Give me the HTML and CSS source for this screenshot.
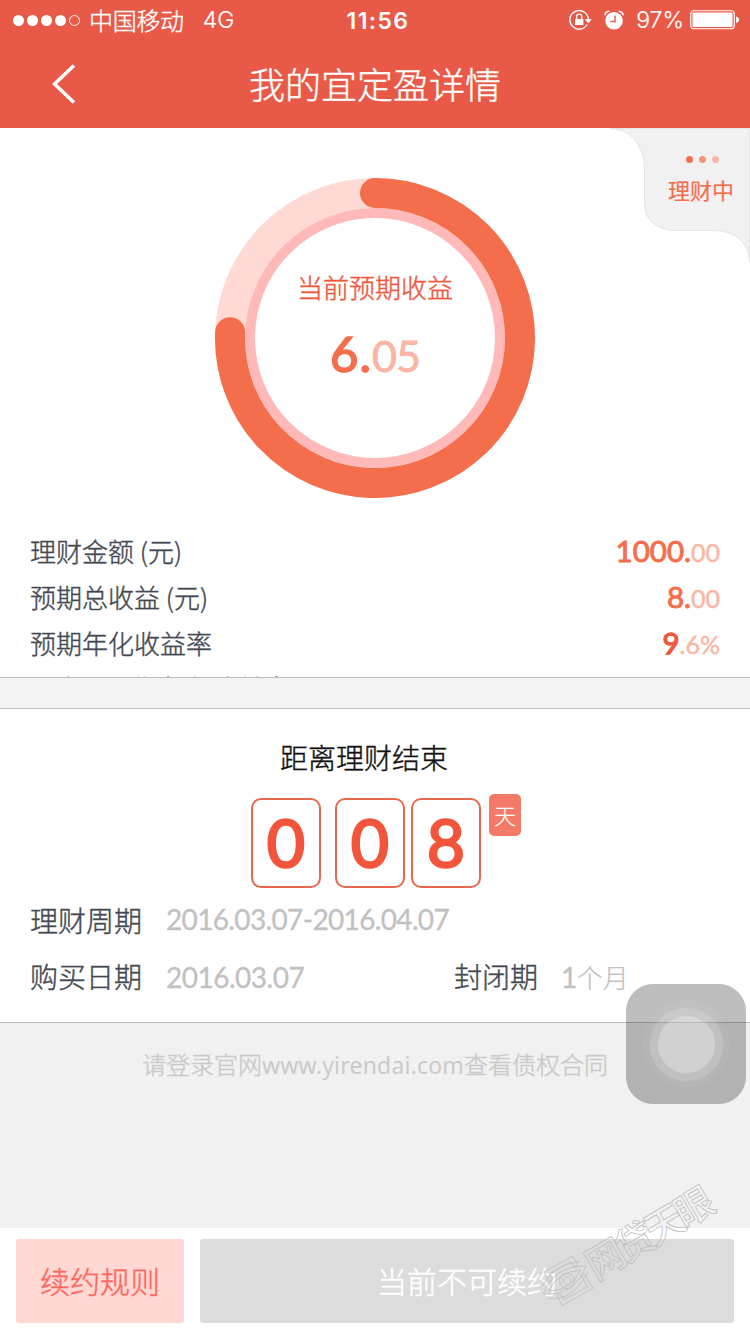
FILE: index.html
```html
<!DOCTYPE html>
<html lang="zh-CN">
<head>
<meta charset="utf-8">
<title>我的宜定盈详情</title>
<link rel="stylesheet" href="styles.css">
</head>
<body>
<div class="screen">
  <header class="header">
    <div class="status">
      <div class="status-left">
        <svg class="signal" width="70" height="14" viewBox="0 0 70 14"><g fill="#fff"><circle cx="6.500" cy="7.500" r="5.500"/><circle cx="20.500" cy="7.500" r="5.500"/><circle cx="34.500" cy="7.500" r="5.500"/><circle cx="48.500" cy="7.500" r="5.500"/></g><circle cx="62.500" cy="7.500" r="5" fill="none" stroke="#fff"/></svg>
        <span class="carrier">中国移动</span>
        <span class="network">4G</span>
      </div>
      <div class="time">11:56</div>
      <div class="status-right">
        <svg class="lock" width="24" height="22" viewBox="0 0 24 22"><path d="M19.2 15.500A9.300 9.300 0 1 1 19.600 7" fill="none" stroke="#fff" stroke-width="1.4"/><path d="M19.600 7q.8 1.500.9 4" fill="none" stroke="#fff" stroke-width="1.4"/><path d="M16.600 10.200h7.200l-3.600 4z" fill="#fff"/><rect x="7" y="10" width="8.400" height="6" fill="#fff"/><path d="M8.600 10V7.700a2.600 2.600 0 0 1 5.200 0V10" fill="none" stroke="#fff" stroke-width="1.3"/></svg>
        <svg class="alarm" width="20" height="20" viewBox="0 0 20 20"><circle cx="10" cy="10.800" r="8.800" fill="#fff"/><path d="M.9 5.300Q1 1.500 5.400 1.200M19.100 5.300Q19 1.500 14.600 1.200" fill="none" stroke="#fff" stroke-width="1.6"/><path d="M11 5.500v6H6.500" fill="none" stroke="#e95947" stroke-width="1.4"/></svg>
        <span class="percent">97%</span>
        <svg class="battery" width="50" height="20" viewBox="0 0 50 20"><rect x=".75" y=".75" width="43.500" height="18" rx="3" fill="none" stroke="#fff" stroke-width="1.2"/><rect x="2.500" y="2.500" width="40" height="14.500" rx="1" fill="#fff"/><path d="M46 6.500q3 .6 3 3.200t-3 3.300z" fill="#fff"/></svg>
      </div>
    </div>
    <div class="nav">
      <svg class="back" width="24" height="42" viewBox="0 0 24 42"><path d="M22 2.500 2.500 21 22 39.500" fill="none" stroke="#fff" stroke-width="3.600"/></svg>
      <h1 class="title">我的宜定盈详情</h1>
    </div>
  </header>

  <section class="summary">
    <div class="state">
      <svg class="state-bg" width="140" height="136" viewBox="0 0 140 136"><path d="M0 .5C20 .5 34.500 18 34.500 40V76C34.500 91 46 102.500 66 102.500H104C126 102.500 139.500 116 139.500 134V.5Z" fill="#f1f1f1" stroke="#e5e5e5"/></svg>
      <div class="state-dots"><i></i><i></i><i></i></div>
      <div class="state-text">理财中</div>
    </div>
    <div class="gauge">
      <svg class="ring" width="320" height="320" viewBox="0 0 320 320" fill="none"><circle cx="160" cy="160" r="145" stroke="#ffd9d3" stroke-width="30"/><circle cx="160" cy="160" r="125" stroke="#ffb9b9" stroke-width="10"/><path d="M160 15A145 145 0 1 1 15.100 154.300" stroke="#f56e4c" stroke-width="30" stroke-linecap="round"/></svg>
      <div class="gauge-text">
        <div class="gauge-label">当前预期收益</div>
        <div class="gauge-value"><b>6.</b><span>05</span></div>
      </div>
    </div>
    <div class="rows">
      <div class="row"><span>理财金额 (元)</span><span class="amount"><b>1000.</b>00</span></div>
      <div class="row"><span>预期总收益 (元)</span><span class="amount"><b>8.</b>00</span></div>
      <div class="row"><span>预期年化收益率</span><span class="amount rate"><b>9</b>.6%</span></div>
      <div class="row next"><span>已实现预期年化收益率</span></div>
    </div>
  </section>

  <div class="gap"></div>

  <section class="term">
    <h2 class="term-title">距离理财结束</h2>
    <div class="countdown">
      <span class="digit">0</span><span class="digit second">0</span><span class="digit">8</span><span class="unit">天</span>
    </div>
    <div class="info">
      <span class="key">理财周期</span><span class="date period">2016.03.07-2016.04.07</span>
    </div>
    <div class="info purchase">
      <span class="key">购买日期</span><span class="date">2016.03.07</span>
      <span class="key closed">封闭期</span><span class="months"><i>1</i>个月</span>
    </div>
  </section>

  <p class="note">请登录官网<span>www.yirendai.com</span>查看债权合同</p>

  <footer class="actions">
    <button class="btn rules">续约规则</button>
    <button class="btn disabled">当前不可续约</button>
  </footer>

  <div class="assist"><i class="halo"></i><i class="mid"></i><i class="core"></i></div>

  <svg class="watermark" width="220" height="164" viewBox="0 0 220 164" fill="none" stroke="#c0c0c0" stroke-width=".8">
    <g transform="translate(37 111) rotate(-29)">
      <path d="M-16 -7V-19H17V-9H13V-15H-12V-8ZM-16 8V19H19V3H15V15H-12V8Z"/>
      <path d="M-27 0Q-5 -20 24 -4Q0 17 -27 0ZM-21 0Q-4 -13 17 -3Q0 11 -21 0Z"/>
      <circle r="7.500"/><circle r="4"/><path d="M-25 6Q-5 21 23 2M-23 -8Q-5 -21 21 -11"/>
    </g>
    <text class="watermark-text" transform="translate(66 111) rotate(-30.500)">网贷天眼</text>
  </svg>
</div>
</body>
</html>
```

FILE: styles.css
```css
* { box-sizing: border-box; }
body { margin: 0; font-family: "Noto Sans CJK SC", sans-serif; font-weight: 300; -webkit-text-stroke: 0.4px currentColor; }
i { font-style: normal; }
svg { display: block; flex: none; }

.screen { position: relative; display: flex; flex-direction: column; width: 750px; height: 1334px; overflow: hidden; background: #f1f1f1; }

.header { height: 128px; background: #e95947; color: #fff; }
.status { display: grid; grid-template-columns: 1fr auto 1fr; height: 40px; padding: 0 10px 0 12px; font-size: 24px; line-height: 38px; }
.status-left, .status-right { display: flex; align-items: center; height: 40px; }
.signal { margin-top: -1px; }
.carrier { margin-left: 7px; letter-spacing: -0.3px; }
.network { margin-left: 19px; font-family: Inter, sans-serif; font-weight: 300; font-size: 23px; line-height: 41px; -webkit-text-stroke: 0.2px; }
.time { padding-left: 4px; font-family: Inter, sans-serif; font-weight: 600; font-size: 23px; letter-spacing: 1.4px; line-height: 42px; -webkit-text-stroke: 0; }
.status-right { justify-content: flex-end; }
.alarm { margin-left: 12px; }
.percent { margin-left: 12px; font-family: Inter, sans-serif; font-size: 23px; line-height: 42px; -webkit-text-stroke: 0.2px; }
.battery { margin-left: 6px; }
.nav { display: grid; grid-template-columns: 52px 24px 1fr 76px; align-items: center; height: 88px; }
.back { grid-column: 2; }
.title { margin: 0; padding-bottom: 2px; font-size: 36px; font-weight: 300; line-height: 84px; text-align: center; }

.summary { position: relative; height: 550px; padding: 50px 30px 0; overflow: hidden; background: #fff; border-bottom: 1px solid #bdbdbd; }
.state { position: absolute; top: 0; right: 0; width: 140px; height: 136px; color: #f56e4c; }
.state-bg { position: absolute; inset: 0; }
.state-dots { position: relative; display: flex; gap: 6px; padding: 28px 0 0 76px; }
.state-dots i { width: 7px; height: 7px; border-radius: 50%; background: #f56e4c; }
.state-dots i:nth-child(2) { background: #f4937b; }
.state-dots i:nth-child(3) { background: #f4b9ab; }
.state-text { position: relative; padding: 8px 0 0 58px; font-size: 22px; font-weight: 400; line-height: 36px; -webkit-text-stroke: 0.2px; }
.gauge { display: grid; justify-content: center; height: 320px; }
.ring, .gauge-text { grid-area: 1 / 1; }
.gauge-text { padding-top: 89px; text-align: center; }
.gauge-label { color: #ef573d; font-size: 26px; line-height: 40px; }
.gauge-value { margin-top: 16px; font-family: Lato, sans-serif; line-height: 60px; }
.gauge-value b { color: #f56e4c; font-size: 49px; font-weight: 400; letter-spacing: 1px; -webkit-text-stroke: 1.6px; }
.gauge-value span { color: #fab5a4; font-size: 43px; font-weight: 400; letter-spacing: -1px; -webkit-text-stroke: 0.8px; }
.rows { padding-top: 31px; }
.row { display: flex; justify-content: space-between; height: 46px; color: #434852; font-size: 26px; line-height: 44px; }
.next { margin-top: -1px; }
.amount { color: #fab5a4; font-family: Lato, sans-serif; font-size: 25px; font-weight: 400; line-height: 44px; }
.amount b { color: #f56e4c; font-size: 29.5px; font-weight: 400; -webkit-text-stroke: 1px; }
.rate b { color: #ef573d; -webkit-text-stroke: 1.3px; }

.gap { height: 30px; background: #f3f3f3; }

.term { height: 315px; background: #fff; border-top: 1px solid #bdbdbd; border-bottom: 1px solid #bdbdbd; }
.term-title { margin: 0; padding: 28px 0 0 280px; color: #111; font-size: 28px; font-weight: 300; line-height: 40px; }
.countdown { display: flex; align-items: flex-end; height: 111px; padding-left: 251px; }
.digit { width: 70px; height: 90px; border: 2px solid #e8694d; border-radius: 10px; color: #f2553c; font-family: Lato, sans-serif; font-size: 66px; font-weight: 400; line-height: 84px; text-align: center; -webkit-text-stroke: 2.4px; }
.second { margin: 0 6px 0 14px; }
.unit { align-self: flex-start; width: 32px; height: 42px; margin: 17px 0 0 8px; border-radius: 5px; background: #f27a66; color: #fff; font-size: 22px; line-height: 41px; text-align: center; -webkit-text-stroke: 0.2px; }
.info { display: flex; height: 56px; padding: 4px 30px 0; color: #434852; font-size: 28px; line-height: 56px; }
.key { width: 136px; }
.date, .months i { color: #c1c1c1; font-family: Lato, sans-serif; font-weight: 400; letter-spacing: -0.5px; -webkit-text-stroke: 0.3px; }
.period { letter-spacing: -0.65px; line-height: 55px; }
.purchase .date { width: 288px; line-height: 59px; }
.closed { width: 107px; }
.months { color: #c1c1c1; font-size: 26px; line-height: 57px; -webkit-text-stroke: 0.2px; }
.months i { font-size: 28px; }

.note { margin: 21px 0 0; color: #cacaca; font-size: 24px; line-height: 40px; text-align: center; }
.note span { font-family: "Noto Sans", sans-serif; font-weight: 400; font-size: 23px; letter-spacing: 0.2px; -webkit-text-stroke: 0; }

.actions { display: flex; gap: 16px; height: 106px; margin-top: auto; padding: 11px 16px; background: #fff; }
.btn { height: 84px; padding: 0 0 2px; border: 0; border-radius: 3px; font: 300 30px/82px "Noto Sans CJK SC", sans-serif; -webkit-text-stroke: 0.4px; }
.rules { width: 168px; background: #ffd8d3; color: #ff665c; }
.disabled { flex: 1; background: #dcdcdc; color: #fff; }

.assist { position: absolute; left: 626px; top: 984px; display: grid; place-items: center; width: 120px; height: 120px; border-radius: 27px; background: rgba(0, 0, 0, 0.26); }
.assist i { grid-area: 1 / 1; border-radius: 50%; }
.halo { width: 88px; height: 88px; background: rgba(255, 255, 255, 0.05); }
.mid { width: 75px; height: 75px; border: 1px solid rgba(0, 0, 0, 0.04); background: rgba(255, 255, 255, 0.15); }
.core { width: 59px; height: 59px; border: 1px solid rgba(0, 0, 0, 0.07); background: rgba(255, 255, 255, 0.27); }

.watermark { position: absolute; left: 530px; top: 1170px; overflow: visible; }
.watermark-text { font-size: 39px; font-weight: 500; letter-spacing: -4.8px; -webkit-text-stroke: 0.8px #c0c0c0; }
```
